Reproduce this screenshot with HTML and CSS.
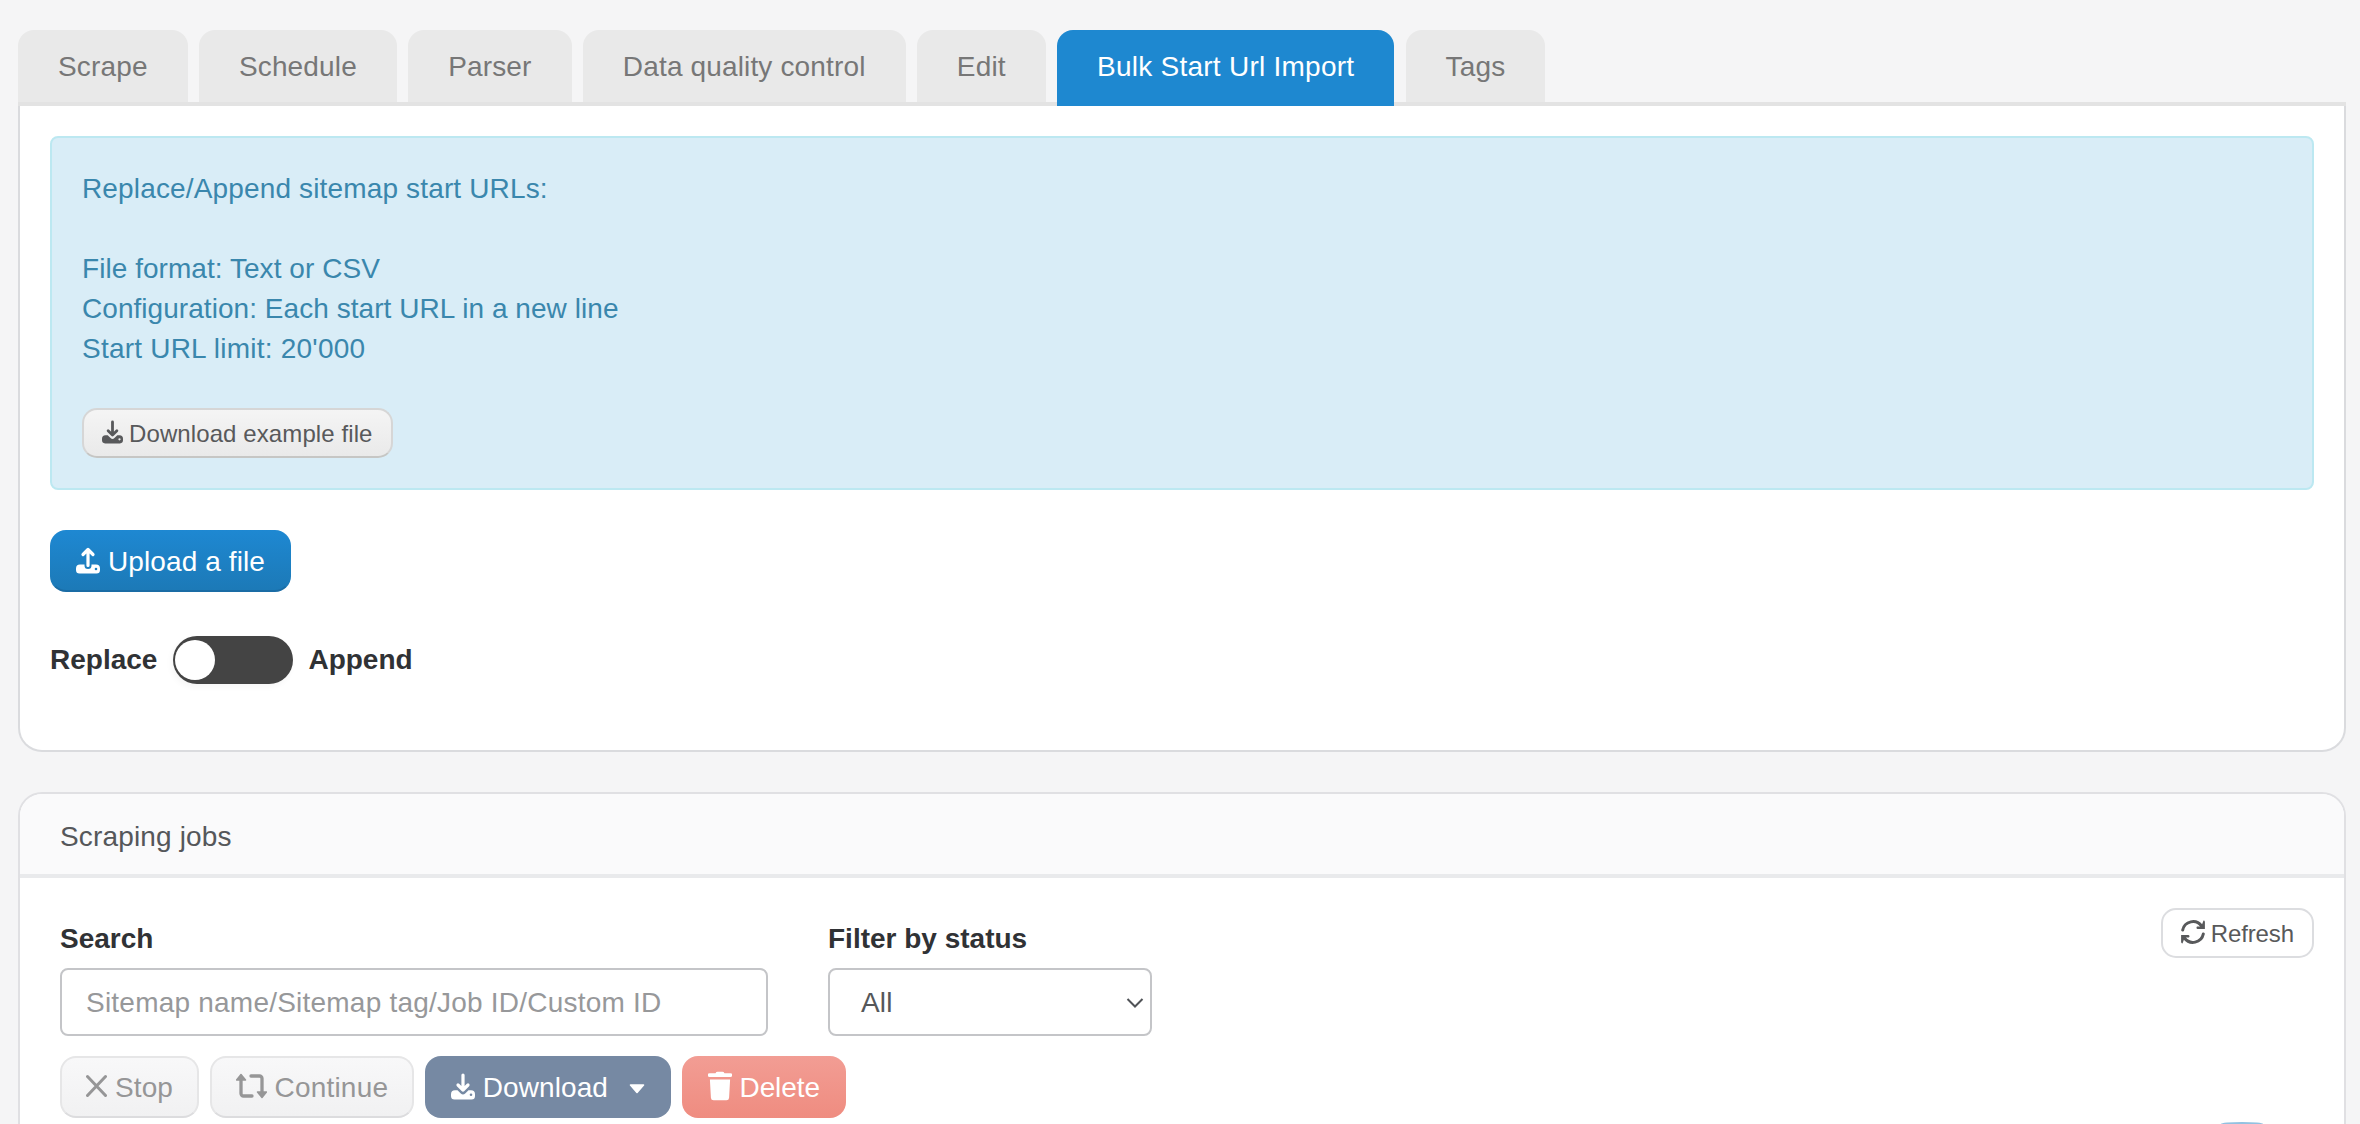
FILE: index.html
```html
<!DOCTYPE html>
<html lang="en">

<head>
    <meta charset="UTF-8">
    <meta name="viewport" content="width=device-width, initial-scale=1.0">
    <title>Bulk Start Url Import</title>
    <link rel="stylesheet" href="styles.css">
</head>

<body>
    <!-- Tabs -->
    <nav class="tabs">
        <a class="tab">Scrape</a>
        <a class="tab">Schedule</a>
        <a class="tab">Parser</a>
        <a class="tab">Data quality control</a>
        <a class="tab">Edit</a>
        <a class="tab active">Bulk Start Url Import</a>
        <a class="tab">Tags</a>
    </nav>

    <!-- Import Section -->
    <section class="panel import-panel">
        <div class="alert">
            <p>Replace/Append sitemap start URLs:</p>
            <br>
            <p class="spec">File format: Text or CSV</p>
            <p class="spec">Configuration: Each start URL in a new line</p>
            <p class="limit">Start URL limit: 20'000</p>
            <button class="btn btn-small btn-example">
                <svg class="icon" width="21" height="24" viewBox="0 0 24 27">
                    <path d="M12 2v15M7 12l5 5 5-5" fill="none" stroke="currentColor" stroke-width="3.200" stroke-linecap="round" stroke-linejoin="round"/>
                    <path fill-rule="evenodd" d="M4 17.300h2.500l3.300 3.100a3.200 3.200 0 0 0 4.400 0l3.300-3.100H20a4 4 0 0 1 4 4v1.700a3.500 3.500 0 0 1-3.500 3.500h-17A3.500 3.500 0 0 1 0 23v-1.700a4 4 0 0 1 4-4zm16 3.200a1.300 1.300 0 1 0 0 2.600 1.300 1.300 0 0 0 0-2.600z" fill="currentColor"/>
                </svg>
                <span>Download example file</span>
            </button>
        </div>

        <button class="btn btn-primary btn-upload">
            <svg class="icon" width="24" height="27" viewBox="0 0 24 27">
                <path d="M12 18.500V3M7 7.500l5-5 5 5" fill="none" stroke="currentColor" stroke-width="3.200" stroke-linecap="round" stroke-linejoin="round"/>
                <path fill-rule="evenodd" d="M4 17.500h4.500v1a3.500 3.500 0 0 0 7 0v-1H20a4 4 0 0 1 4 4V23a3.500 3.500 0 0 1-3.500 3.500h-17A3.500 3.500 0 0 1 0 23v-1.500a4 4 0 0 1 4-4zm16 3.200a1.300 1.300 0 1 0 0 2.600 1.300 1.300 0 0 0 0-2.600z" fill="currentColor"/>
            </svg>
            <span>Upload a file</span>
        </button>

        <div class="mode">
            <strong>Replace</strong>
            <span class="switch"><span class="knob"></span></span>
            <strong>Append</strong>
        </div>
    </section>

    <!-- Jobs Section -->
    <section class="panel jobs-panel">
        <h2 class="panel-title">Scraping jobs</h2>
        <div class="jobs">
            <div class="filters">
                <div class="field search">
                    <label for="search">Search</label>
                    <input type="text" id="search" placeholder="Sitemap name/Sitemap tag/Job ID/Custom ID">
                </div>
                <div class="field status">
                    <label>Filter by status</label>
                    <div class="select">
                        <span>All</span>
                        <svg width="18" height="12" viewBox="0 0 18 12"><path d="M1.500 2L9 9.500 16.500 2" fill="none" stroke="#505357" stroke-width="2"/></svg>
                    </div>
                </div>
                <button class="btn btn-small btn-refresh">
                    <svg class="icon" width="24" height="24" viewBox="0 0 24 24">
                        <g fill="none" stroke="currentColor" stroke-width="3" stroke-linecap="round">
                            <path d="M1.700 10A10.500 10.500 0 0 1 20.500 6"/>
                            <path d="M22.300 14A10.500 10.500 0 0 1 3.500 18"/>
                        </g>
                        <path d="M22.500 .5a1.400 1.400 0 0 1 1.400 1.400v7.200h-7.400a1.400 1.400 0 0 1-.4-2.500L19 6.500l2-2zM1.500 23.500a1.400 1.400 0 0 1-1.400-1.400v-7.200h7.400a1.400 1.400 0 0 1 .4 2.500L5 17.500l-2 2z" fill="currentColor"/>
                    </svg>
                    <span>Refresh</span>
                </button>
            </div>
            <div class="actions">
                <button class="btn btn-muted">
                    <svg class="icon" width="21" height="24" viewBox="0 0 21 24"><path d="M1.500 2.500l18 19M19.500 2.500l-18 19" fill="none" stroke="currentColor" stroke-width="3" stroke-linecap="round"/></svg>
                    <span>Stop</span>
                </button>
                <button class="btn btn-muted btn-continue">
                    <svg class="icon" width="31" height="26" viewBox="0 0 31 26">
                        <path d="M5 5v15.500a2.500 2.500 0 0 0 2.500 2.500H16M15 3h8.500A2.500 2.500 0 0 1 26 5.500V21" fill="none" stroke="currentColor" stroke-width="3.300" stroke-linecap="round"/>
                        <path d="M5 1.500L9.500 7h-9zM26 24.500l4.500-5.500h-9z" fill="currentColor" stroke="currentColor" stroke-width="1.500" stroke-linejoin="round"/>
                    </svg>
                    <span>Continue</span>
                </button>
                <button class="btn btn-download">
                    <svg class="icon" width="24" height="27" viewBox="0 0 24 27">
                        <path d="M12 2v15M7 12l5 5 5-5" fill="none" stroke="currentColor" stroke-width="3.200" stroke-linecap="round" stroke-linejoin="round"/>
                        <path fill-rule="evenodd" d="M4 17.300h2.500l3.300 3.100a3.200 3.200 0 0 0 4.400 0l3.300-3.100H20a4 4 0 0 1 4 4v1.700a3.500 3.500 0 0 1-3.500 3.500h-17A3.500 3.500 0 0 1 0 23v-1.700a4 4 0 0 1 4-4zm16 3.200a1.300 1.300 0 1 0 0 2.600 1.300 1.300 0 0 0 0-2.600z" fill="currentColor"/>
                    </svg>
                    <span>Download</span>
                    <svg class="caret" width="16" height="10" viewBox="0 0 16 10"><path d="M1.500 1h13L8 8.500z" fill="currentColor" stroke="currentColor" stroke-width="1.600" stroke-linejoin="round"/></svg>
                </button>
                <button class="btn btn-danger">
                    <svg class="icon" width="24" height="30" viewBox="0 0 24 30"><path d="M7.500 2.200Q8.200.8 9.600.8h4.800q1.400 0 2.100 1.400H22.500a1.700 1.700 0 0 1 0 3.700h-21a1.700 1.700 0 0 1 0-3.700zM1.900 8.500h20.200l-1 18.300a2.700 2.700 0 0 1-2.700 2.500h-12.800a2.700 2.700 0 0 1-2.700-2.500z" fill="currentColor"/></svg>
                    <span>Delete</span>
                </button>
            </div>
        </div>
    </section>

    <div class="chat-bubble"></div>
</body>

</html>
```

FILE: styles.css
```css
* {
    box-sizing: border-box;
}

body {
    margin: 0;
    height: 1124px;
    padding: 30px 14px 0 18px;
    overflow: hidden;
    position: relative;
    background-color: #f5f5f6;
    color: #55575a;
    font-family: "Liberation Sans", Arial, sans-serif;
    font-size: 28px;
    line-height: 40px;
    letter-spacing: 0.15px;
}

p,
h2 {
    margin: 0;
    font-size: 28px;
    font-weight: normal;
}

strong,
label {
    color: #303235;
    font-weight: bold;
    letter-spacing: 0;
}

/* Tabs */
.tabs {
    display: flex;
    gap: 11.3px;
    height: 76px;
    border-bottom: 4px solid #e3e3e3;
}

.tab {
    height: 72px;
    padding: 17px 40px 15px;
    border-radius: 16px 16px 0 0;
    background-color: #e9e9e9;
    color: #777;
    white-space: nowrap;
}

.tab.active {
    height: 76px;
    background-color: #1e88d0;
    color: #fff;
    letter-spacing: 0.25px;
}

/* Panels */
.panel {
    background-color: #fff;
    border: 2px solid #dadbde;
}

.import-panel {
    height: 646px;
    padding: 30px;
    border-top: none;
    border-radius: 0 0 24px 24px;
}

.alert {
    height: 354px;
    padding: 31px 30px 29px;
    border: 2px solid #bce8f1;
    border-radius: 8px;
    background-color: #d9edf7;
    color: #3a87ad;
}

.spec {
    letter-spacing: 0.05px;
}

.limit {
    letter-spacing: 0.22px;
}

/* Buttons */
.btn {
    display: flex;
    align-items: center;
    gap: 8px;
    height: 62px;
    padding: 0 24px;
    border: 2px solid transparent;
    border-radius: 16px;
    font-family: inherit;
    font-size: 28px;
    line-height: 40px;
    letter-spacing: 0.1px;
    white-space: nowrap;
    color: #fff;
}

.btn span {
    padding-top: 2px;
}

.icon {
    flex-shrink: 0;
    margin-bottom: 2px;
}

.btn-small {
    height: 50px;
    padding: 0 18px;
    gap: 6px;
    border-radius: 15px;
    font-size: 24px;
    color: #58595b;
}

.btn-example {
    margin-top: 39px;
    border-color: #d6d6d6;
    border-bottom-color: #c6c6c4;
    background: linear-gradient(#f5f5f5, #e9e9e9) border-box;
}

.btn-primary {
    background: linear-gradient(#1e88d2, #1c79b6) border-box;
    border-bottom-color: #1a6ca5;
}

.btn-upload {
    margin-top: 40px;
}

.btn-muted {
    border-color: #e6e6e7;
    border-bottom-color: #dcdcde;
    background: linear-gradient(#f8f8f9, #f1f1f2);
    color: #969697;
}

.btn-continue {
    letter-spacing: 0.2px;
}

.btn-download {
    background: #7689a3 border-box;
}

.btn-danger {
    background: linear-gradient(#f29d94, #ef8c80) border-box;
    letter-spacing: -0.1px;
}

.caret {
    flex-shrink: 0;
    margin-top: 4px;
    margin-left: 13px;
}

.btn-refresh {
    margin-left: auto;
    border-color: #dcdde0;
    background-color: #fff;
    letter-spacing: -0.1px;
}

/* Replace / Append switch */
.mode {
    display: flex;
    align-items: center;
    gap: 15px;
    margin-top: 44px;
    letter-spacing: 0.1px;
}

.switch {
    width: 120px;
    height: 48px;
    margin-left: 1px;
    padding: 4px 2px;
    border-radius: 24px;
    background-color: #444;
    box-shadow: -2px 3px 6px rgba(0, 0, 0, 0.04);
}

.knob {
    display: block;
    width: 40px;
    height: 40px;
    border-radius: 50%;
    background-color: #fff;
}

/* Jobs */
.jobs-panel {
    height: 332px;
    margin-top: 40px;
    border-color: #e0e0e3;
    border-bottom: none;
    border-radius: 24px 24px 0 0;
    overflow: hidden;
}

.panel-title {
    height: 84px;
    padding: 23px 40px 17px;
    border-bottom: 4px solid #e9eaec;
    background-color: #fafafb;
}

.jobs {
    padding: 30px 30px 0 40px;
}

.filters {
    display: flex;
    align-items: flex-start;
}

.field {
    display: flex;
    flex-direction: column;
    gap: 9px;
    padding-top: 11px;
}

.search {
    width: 708px;
}

.status {
    width: 324px;
    margin-left: 60px;
}

.search input,
.select {
    width: 100%;
    height: 68px;
    border: 2px solid #c4c5c8;
    border-radius: 8px;
    background-color: #fff;
    font-family: inherit;
    font-size: 28px;
}

.search input {
    padding: 1px 24px 0;
    letter-spacing: 0.22px;
}

.search input::placeholder {
    color: #97989a;
}

.select {
    display: flex;
    align-items: center;
    justify-content: space-between;
    padding: 2px 6px 0 31px;
}

.actions {
    display: flex;
    gap: 10.5px;
    margin-top: 20px;
}

/* Top edge of the chat button, peeking in at the bottom of the window */
.chat-bubble {
    position: absolute;
    left: 2221px;
    bottom: 0;
    width: 42px;
    height: 2px;
    border-radius: 50% 50% 0 0 / 100% 100% 0 0;
    background-color: #93c1e0;
}
```
